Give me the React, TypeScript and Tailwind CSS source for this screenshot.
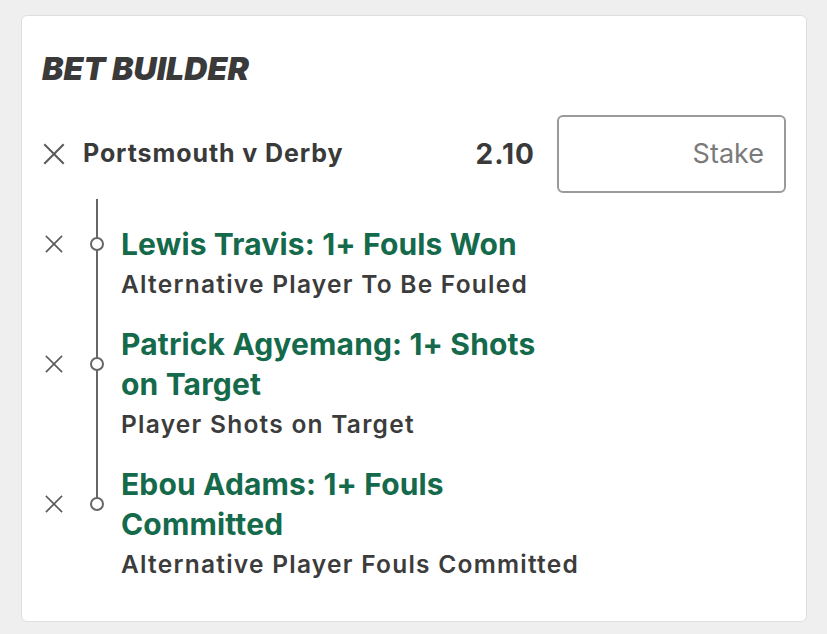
import React from "react";

type Leg = {
  title: string;
  market: string;
};

const legs: Leg[] = [
  { title: "Lewis Travis: 1+ Fouls Won", market: "Alternative Player To Be Fouled" },
  { title: "Patrick Agyemang: 1+ Shots on Target", market: "Player Shots on Target" },
  { title: "Ebou Adams: 1+ Fouls Committed", market: "Alternative Player Fouls Committed" },
];

function CloseIcon({ size = 24 }: { size?: number }) {
  return (
    <svg width={size} height={size} viewBox="0 0 24 24" fill="none" stroke="#5a5a5a" strokeWidth={2} strokeLinecap="square">
      <line x1="3" y1="3" x2="21" y2="21" />
      <line x1="21" y1="3" x2="3" y2="21" />
    </svg>
  );
}

export default function App() {
  return (
    <div className="h-[634px] bg-[#efefef] px-[21px] pt-[15px] font-['Inter',sans-serif]">
      <div className="h-[607px] w-[786px] rounded-md border border-[#dedede] bg-white pl-[20px] pr-[20px] pt-[33px]">
        <h1 className="text-[32px] font-black italic leading-[40px] tracking-[0.1px] text-[#3a3a3a]">
          BET BUILDER
        </h1>

        {/* Event row */}
        <div className="mt-[26px] flex items-center">
          <CloseIcon size={24} />
          <span className="ml-[17px] text-[25px] font-bold tracking-[0.9px] text-[#3a3a3a]">Portsmouth v Derby</span>
          <span className="ml-auto text-[28px] font-bold tracking-[1px] text-[#3a3a3a]">2.10</span>
          <div className="ml-[22px] flex h-[78px] w-[229px] items-center justify-end rounded-md border-2 border-[#9a9a9a] pr-[20px]">
            <span className="text-[27px] text-[#7a7a7a]">Stake</span>
          </div>
        </div>

        {/* Legs timeline */}
        <div className="relative mt-[6px] pt-[25px]">
          <div className="absolute left-[54px] top-0 h-[300px] w-[2px] bg-[#666]" />
          <div className="flex flex-col gap-[20px]">
            {legs.map((leg) => (
              <div key={leg.title} className="relative">
                <div className="flex items-center">
                  <div className="ml-[2px] w-[22px]">
                    <CloseIcon size={20} />
                  </div>
                  <div className="ml-[24px] flex w-[14px] justify-center">
                    <div className="relative z-10 h-[14px] w-[14px] rounded-full border-2 border-[#666] bg-white" />
                  </div>
                  <div className="ml-[17px] max-w-[440px] text-[30px] font-bold leading-[40px] tracking-[0.15px] text-[#146a4b]">
                    {leg.title}
                  </div>
                </div>
                <div className="pl-[79px] text-[24.5px] font-semibold leading-[40px] tracking-[1.25px] text-[#3c3c3c]">
                  {leg.market}
                </div>
              </div>
            ))}
          </div>
        </div>
      </div>
    </div>
  );
}
